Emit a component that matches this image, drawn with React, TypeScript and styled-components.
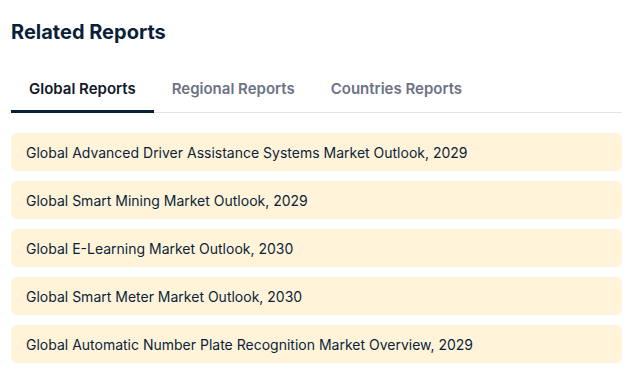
import React, { useState } from 'react'
import styled, { createGlobalStyle } from 'styled-components'

const GlobalStyle = createGlobalStyle`
  body { margin: 0; background: #fff; font-family: Inter, "Noto Sans", sans-serif; }
`

const tabs = ['Global Reports', 'Regional Reports', 'Countries Reports']

const reports = [
  'Global Advanced Driver Assistance Systems Market Outlook, 2029',
  'Global Smart Mining Market Outlook, 2029',
  'Global E-Learning Market Outlook, 2030',
  'Global Smart Meter Market Outlook, 2030',
  'Global Automatic Number Plate Recognition Market Overview, 2029',
]

const App = () => {
  const [active, setActive] = useState(0)

  return (
    <ScWrap>
      <GlobalStyle />
      <Title>Related Reports</Title>
      <TabBar>
        {tabs.map((t, i) => (
          <Tab key={t} $active={i === active} onClick={() => setActive(i)}>
            {t}
          </Tab>
        ))}
      </TabBar>
      <List>
        {reports.map(r => (
          <Item key={r}>{r}</Item>
        ))}
      </List>
    </ScWrap>
  )
}

const ScWrap = styled.div`
  padding: 20px 12px 0 11px;
  width: 611px;
`

const Title = styled.h2`
  margin: 0;
  font-size: 20px;
  font-weight: 700;
  color: #0b1f3a;
  line-height: 24px;
`

const TabBar = styled.div`
  display: flex;
  margin-top: 21px;
  border-bottom: 1px solid #e6e6e6;
`

const Tab = styled.button<{ $active: boolean }>`
  padding: 14px 18px 12px;
  border: 0;
  background: none;
  font-family: inherit;
  font-size: 15px;
  font-weight: 600;
  cursor: pointer;
  margin-bottom: -1px;
  color: ${p => (p.$active ? '#111827' : '#6b7384')};
  border-bottom: 3px solid ${p => (p.$active ? '#0b1f3a' : 'transparent')};
`

const List = styled.div`
  display: flex;
  flex-direction: column;
  gap: 10px;
  margin-top: 20px;
`

const Item = styled.div`
  display: flex;
  align-items: center;
  height: 38px;
  padding: 0 15px;
  border-radius: 6px;
  background: #fff4d9;
  color: #0b1f3a;
  font-size: 14px;
`

export default App
